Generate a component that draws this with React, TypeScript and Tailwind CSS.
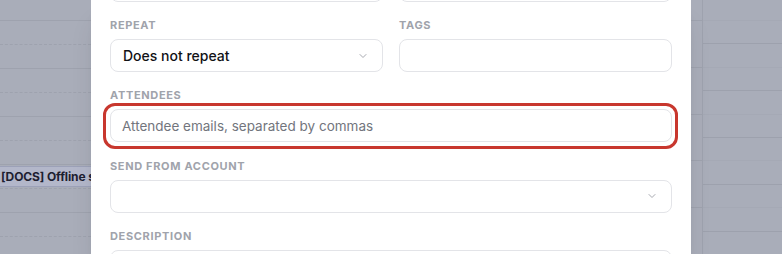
import React from 'react'
import { ChevronDown } from 'lucide-react'

const font = { fontFamily: 'Inter, "Liberation Sans", sans-serif' }

const Label = ({ children }: { children: React.ReactNode }) => (
  <div className="text-[11px] leading-[16px] font-bold tracking-[0.06em] text-[#a0a3ab] mb-[6px]">
    {children}
  </div>
)

const SelectBox = ({ value }: { value?: string }) => (
  <div className="h-[33px] rounded-[8px] border border-[#e3e4e8] bg-white flex items-center justify-between pl-[12px] pr-[13px]">
    <span className="text-[14px] font-medium text-[#111216]">{value}</span>
    <ChevronDown size={12} strokeWidth={2} className="text-[#a7a9b0]" />
  </div>
)

const InputBox = ({ placeholder }: { placeholder?: string }) => (
  <div className="h-[33px] rounded-[8px] border border-[#e3e4e8] bg-white flex items-center pl-[11px]">
    {placeholder && <span className="text-[13.5px] text-[#72757d]">{placeholder}</span>}
  </div>
)

// calendar grid lines behind the overlay
const GridLines = () => (
  <div className="flex flex-col pt-[20px]">
    {Array.from({ length: 10 }).map((_, i) => (
      <div
        key={i}
        className={
          i % 2 === 0
            ? 'h-[24px] border-t border-[#9ea2ae]'
            : 'h-[24px] border-t border-dashed border-[#9ea2ae]'
        }
      />
    ))}
  </div>
)

export default function App() {
  return (
    <div className="h-[254px] w-[782px] overflow-hidden bg-[#a9adb9] flex" style={font}>
      {/* left calendar fragment */}
      <div className="relative w-[91px] shrink-0">
        <GridLines />
        <div className="absolute left-[-10px] w-[140px] top-[166px] h-[21px] bg-[#b3b7ca] border border-[#9ca1b8] flex items-center pl-[10px]">
          <span className="text-[12px] tracking-[-0.01em] font-bold text-[#1d2030] whitespace-nowrap">[DOCS] Offline storage</span>
        </div>
      </div>

      {/* modal */}
      <div className="relative z-10 w-[600px] shrink-0 bg-white shadow-xl px-[19px]">
        <div className="flex flex-col gap-[15.4px] mt-[-31.3px]">
          <div className="grid grid-cols-2 gap-4">
            <InputBox />
            <InputBox />
          </div>
          <div className="grid grid-cols-2 gap-4">
            <div>
              <Label>REPEAT</Label>
              <SelectBox value="Does not repeat" />
            </div>
            <div>
              <Label>TAGS</Label>
              <InputBox />
            </div>
          </div>
          <div>
            <Label>ATTENDEES</Label>
            <div className="relative">
              <InputBox placeholder="Attendee emails, separated by commas" />
              <div className="absolute -left-[7px] -right-[6px] -top-[6px] -bottom-[7px] border-[3px] border-[#c8372e] rounded-[12px] pointer-events-none" />
            </div>
          </div>
          <div>
            <Label>SEND FROM ACCOUNT</Label>
            <SelectBox />
          </div>
          <div>
            <Label>DESCRIPTION</Label>
            <InputBox />
          </div>
        </div>
      </div>

      {/* right calendar fragment */}
      <div className="flex flex-1">
        <div className="w-[12px] flex flex-col pt-[20px] border-r border-[#9ea2ae]">
          {Array.from({ length: 5 }).map((_, i) => (
            <div key={i} className="h-[48px] border-t border-[#9ea2ae]" />
          ))}
        </div>
        <div className="flex-1 flex flex-col pt-[20px]">
          {Array.from({ length: 10 }).map((_, i) => (
            <div
              key={i}
              className={i % 2 === 0 ? 'h-[24px] border-t border-[#a5a9b5]' : 'h-[24px] border-t border-[#9da1ad]'}
            />
          ))}
        </div>
      </div>
    </div>
  )
}
